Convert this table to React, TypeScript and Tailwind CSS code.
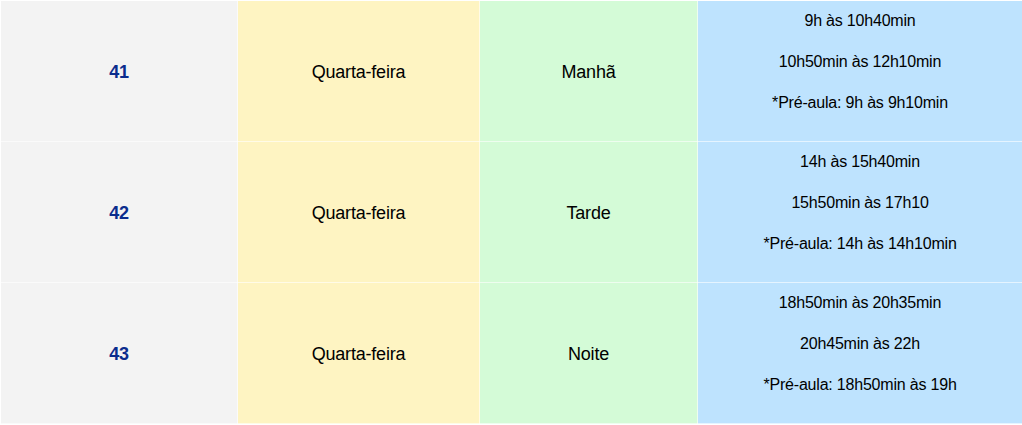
import React from 'react';

const rows = [
  { id: 41, day: 'Quarta-feira', shift: 'Manhã', times: ['9h às 10h40min', '10h50min às 12h10min', '*Pré-aula: 9h às 9h10min'] },
  { id: 42, day: 'Quarta-feira', shift: 'Tarde', times: ['14h às 15h40min', '15h50min às 17h10', '*Pré-aula: 14h às 14h10min'] },
  { id: 43, day: 'Quarta-feira', shift: 'Noite', times: ['18h50min às 20h35min', '20h45min às 22h', '*Pré-aula: 18h50min às 19h'] },
];

const App = () => {
  return (
    <div className="bg-white w-[1022px] h-[425px]" style={{ fontFamily: '"Liberation Sans", Arial, sans-serif' }}>
      <table className="w-[1022px] border-collapse table-fixed text-black">
        <colgroup>
          <col className="w-[237px]" />
          <col className="w-[242px]" />
          <col className="w-[218px]" />
          <col className="w-[325px]" />
        </colgroup>
        <tbody>
          {rows.map((row) => (
            <tr key={row.id} className="h-[141px]">
              <td className="bg-[#f3f3f3] border border-white/60 text-center align-middle pt-[3px] text-[18px] font-bold text-[#0b2c8d] tracking-[-0.3px]">
                {row.id}
              </td>
              <td className="bg-[#fef4c2] border border-white/60 text-center align-middle pt-[3px] text-[18px] tracking-[-0.2px]">
                {row.day}
              </td>
              <td className="bg-[#d4fbd7] border border-white/60 text-center align-middle pt-[3px] text-[18px] tracking-[-0.2px]">
                {row.shift}
              </td>
              <td className="bg-[#bee3fe] border border-white/60 text-center align-top pt-2 text-[16px] tracking-[-0.2px]">
                {row.times.map((t, i) => (
                  <p key={i} className="leading-6 mb-[17px]">{t}</p>
                ))}
              </td>
            </tr>
          ))}
        </tbody>
      </table>
    </div>
  );
};

export default App;
